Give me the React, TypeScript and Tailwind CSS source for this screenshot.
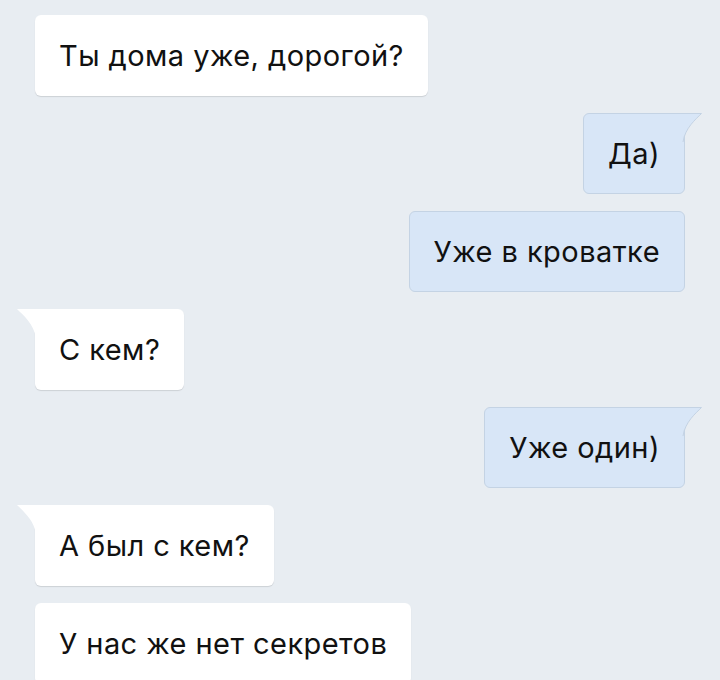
import React from "react"

type Msg = { text: string; out: boolean; tail: boolean }

const messages: Msg[] = [
  { text: "Ты дома уже, дорогой?", out: false, tail: false },
  { text: "Да)", out: true, tail: true },
  { text: "Уже в кроватке", out: true, tail: false },
  { text: "С кем?", out: false, tail: true },
  { text: "Уже один)", out: true, tail: true },
  { text: "А был с кем?", out: false, tail: true },
  { text: "У нас же нет секретов", out: false, tail: false },
]

function Tail({ out }: { out: boolean }) {
  if (out) {
    return (
      <svg className="absolute -right-[20px] -top-px" width="22" height="30" viewBox="0 0 22 30">
        <path d="M0 0.5 H19.5 C14 6 3 15 1 29 L0 29 Z" fill="#d8e6f7" />
        <path d="M0 0.5 H19.5 C14 6 3 15 1 29" fill="none" stroke="#c4d3e4" strokeWidth="1" />
      </svg>
    )
  }
  return (
    <svg className="absolute -left-[20px] top-0" width="22" height="30" viewBox="0 0 22 30">
      <path d="M22 0 H2 C8 6 19 15 21 29 L22 29 Z" fill="#ffffff" />
    </svg>
  )
}

function Bubble({ msg }: { msg: Msg }) {
  const base =
    "relative h-[81px] flex items-center px-[24px] text-[29px] text-[#111] tracking-[0.45px]"
  return (
    <div className={msg.out ? "flex justify-end pr-[35px]" : "flex justify-start pl-[35px]"}>
      <div
        className={
          msg.out
            ? `${base} bg-[#d8e6f7] border border-[#c4d3e4] ${msg.tail ? "rounded-[6px] rounded-tr-none" : "rounded-[6px]"}`
            : `${base} bg-white shadow-[0_1px_1px_rgba(0,0,0,0.12)] ${msg.tail ? "rounded-[6px] rounded-tl-none" : "rounded-[6px]"}`
        }
      >
        {msg.tail && <Tail out={msg.out} />}
        <span>{msg.text}</span>
      </div>
    </div>
  )
}

export default function App() {
  return (
    <div
      className="w-[720px] h-[680px] overflow-hidden bg-[#e8edf2]"
      style={{ fontFamily: "Inter, 'Noto Sans', sans-serif" }}
    >
      <div className="flex flex-col gap-[17px] -mt-[83px]">
        <div className="pl-[35px]">
          <div className="w-[413px] h-[81px] bg-white/40 rounded-[6px] shadow-[0_1px_1px_rgba(0,0,0,0.08)]" />
        </div>
        {messages.map((m, i) => (
          <Bubble key={i} msg={m} />
        ))}
      </div>
    </div>
  )
}
